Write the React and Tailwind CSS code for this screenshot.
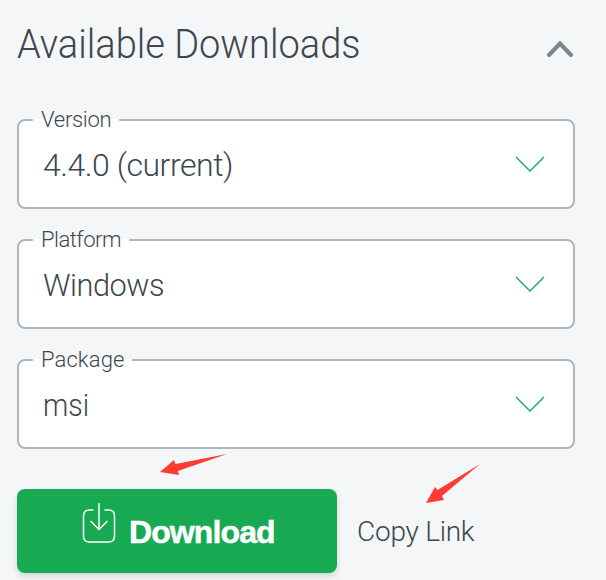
import React from 'react';

const FIELDS = [
    { label: 'Version', value: '4.4.0 (current)', labelClass: 'w-[86px] tracking-[-0.3px]', valueClass: 'tracking-[-0.45px]' },
    { label: 'Platform', value: 'Windows', labelClass: 'w-24 tracking-[-0.5px]', valueClass: 'tracking-[-0.5px] origin-left scale-x-[0.96]' },
    { label: 'Package', value: 'msi', labelClass: 'w-[99px] tracking-[0.1px]', valueClass: 'tracking-[0px] origin-left scale-x-[0.89]' },
];

const SelectField = ({ label, value, labelClass, valueClass }) => (
    <fieldset className="h-[101px] rounded-lg border-2 border-[#b0b8bf] bg-white pl-[14px]">
        <legend className={`h-6 whitespace-nowrap px-2 text-[22px] leading-6 ${labelClass}`}>{label}</legend>
        <div className="flex h-[66px] items-center justify-between pl-[10px] pr-7">
            <span className={`text-[32px] leading-10 ${valueClass}`}>{value}</span>
            <svg width="30" height="18" viewBox="0 0 30 18" fill="none" stroke="#13aa52" strokeWidth="1.3" className="mb-0.5">
                <path d="M1 2L15 16L29 2" />
            </svg>
        </div>
    </fieldset>
);

const DownloadIcon = () => (
    <svg width="34" height="42" viewBox="0 0 34 42" fill="none" stroke="white" strokeWidth="1.5" className="shrink-0">
        <path d="M11.5 8H7.5Q1.5 8 1.5 14V34Q1.5 40 7.5 40H26.5Q32.5 40 32.5 34V14Q32.5 8 26.5 8H22.5" />
        <path d="M17 1V27M8.5 19L17 27.5L25.5 19" />
    </svg>
);

const App = () => {
    return (
        <div className="relative h-[580px] w-[606px] overflow-hidden bg-[#f4f6f8] pl-[17px] pr-[31px] font-['Roboto',sans-serif] font-light text-[#3d474f]">
            <header className="flex h-[108px] items-start justify-between pt-[21px]">
                <h1 className="origin-left scale-x-95 whitespace-nowrap text-[40px] leading-[48px]">Available Downloads</h1>
                <svg width="30" height="20" viewBox="0 0 30 20" fill="none" stroke="#7c868d" strokeWidth="4" strokeLinecap="round" className="mt-[18px]">
                    <path d="M4 16L15 4.5L26 16" />
                </svg>
            </header>

            <main>
                <div className="flex flex-col gap-[19px]">
                    {FIELDS.map(field => (
                        <SelectField key={field.label} {...field} />
                    ))}
                </div>

                <div className="mt-10 flex items-center gap-5">
                    <button className="flex h-[84px] w-80 items-start rounded-lg bg-[#17aa52] pl-[65px] pt-[13px] text-white shadow-[0_3px_6px_rgba(0,0,0,0.15)]">
                        <DownloadIcon />
                        <span className="ml-[13px] mt-3 font-['Liberation_Sans',sans-serif] text-[32px] font-bold leading-9 tracking-[-0.9px] [-webkit-text-stroke:0.5px_white]">Download</span>
                    </button>
                    <a className="mt-0.5 whitespace-nowrap text-[28px] leading-8 tracking-[-0.25px]">Copy Link</a>
                </div>
            </main>

            {/* Pointers over the two actions */}
            <svg width="606" height="580" viewBox="0 0 606 580" fill="#ff3b36" className="pointer-events-none absolute left-0 top-0">
                <path d="M160 472L174 460L175.5 464L227 454L178 471L179 475Z" />
                <path d="M426 503L435 487L437.5 490L480 464L442 496L444 500Z" />
            </svg>
        </div>
    );
};

export default App;
